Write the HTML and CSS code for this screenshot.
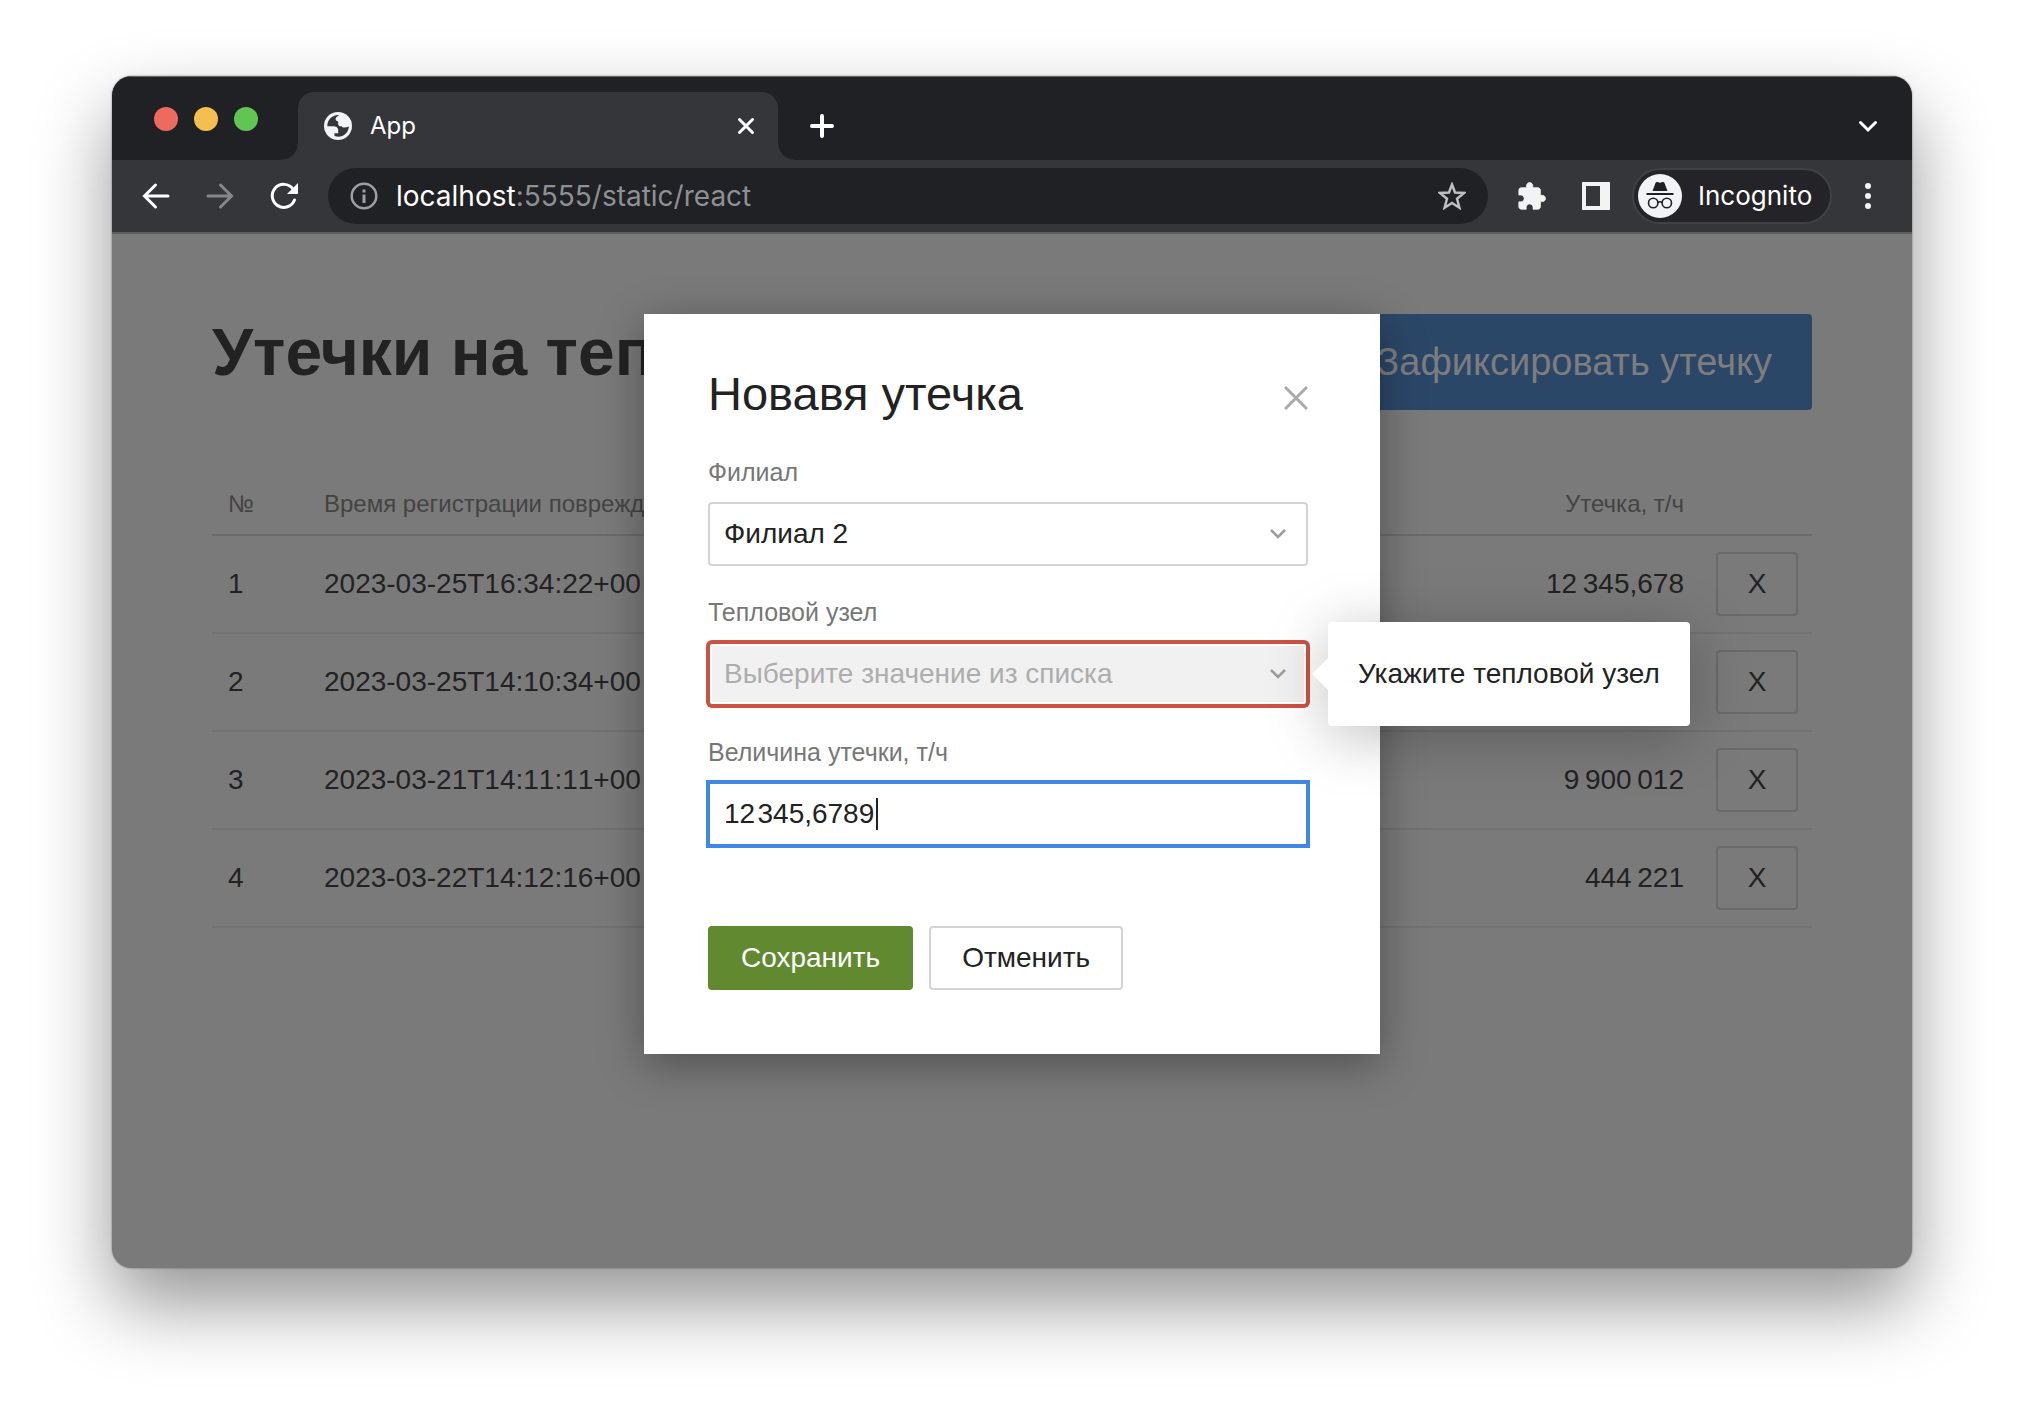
FILE: index.html
```html
<!DOCTYPE html>
<html lang="ru">
<head>
<meta charset="utf-8">
<title>App</title>
<link rel="stylesheet" href="styles.css">
</head>
<body>
<div class="window">
  <header class="tabstrip">
    <div class="lights">
      <span class="light light-close"></span>
      <span class="light light-min"></span>
      <span class="light light-max"></span>
    </div>
    <div class="tab">
      <svg class="icon-28" viewBox="0 0 28 28"><circle cx="14" cy="14" r="14" fill="#f1f3f4"/><path d="M15.500 3.300C13.500 4 11.800 5.200 11.600 6.800c-.2 1.600.8 2.400 2.600 2.600v2.800c.2 1.600 1.800 2.400 3.400 2 .8 1.600 3.600 1.800 7.200.2C24.700 20 20 24.600 14.200 24.800c-2 0-3.600-.6-3.800-1.200v-2.400h3.800v-3.800c-.4-2.400-2.400-3.200-5-3.200H3.300C3.200 8 8 3 14 3z" fill="#35363a"/></svg>
      <span class="tab-title">App</span>
      <button class="bare" aria-label="Close tab"><svg class="icon-28" viewBox="0 0 28 28"><path d="M7.500 7.500l13 13M20.500 7.500l-13 13" stroke="#fff" stroke-width="3" stroke-linecap="round"/></svg></button>
    </div>
    <button class="bare" aria-label="New tab"><svg class="icon-40" viewBox="0 0 40 40"><path d="M20 10v20M10 20h20" stroke="#fff" stroke-width="4" stroke-linecap="round"/></svg></button>
    <button class="bare tab-search" aria-label="Search tabs"><svg class="icon-40" viewBox="0 0 40 40"><path d="M12.500 16.500l7.500 7.500 7.500-7.500" fill="none" stroke="#fff" stroke-width="3" stroke-linecap="round"/></svg></button>
  </header>
  <nav class="toolbar">
    <button class="bare" aria-label="Back"><svg class="icon-40" viewBox="0 0 40 40"><path d="M32 20H9M19.500 9L8.500 20l11 11" fill="none" stroke="#fff" stroke-width="3" stroke-linecap="round"/></svg></button>
    <button class="bare" aria-label="Forward"><svg class="icon-40" viewBox="0 0 40 40"><path d="M8 20h23M20.500 9l11 11-11 11" fill="none" stroke="#86878a" stroke-width="3" stroke-linecap="round"/></svg></button>
    <button class="bare" aria-label="Reload"><svg class="icon-40" viewBox="0 0 40 40"><path d="M30.500 24A11.500 11.500 0 1 1 29 13" fill="none" stroke="#fff" stroke-width="3" stroke-linecap="round"/><path d="M34 7v11H23z" fill="#fff"/></svg></button>
    <div class="omnibox">
      <svg class="icon-28" viewBox="0 0 28 28"><circle cx="14" cy="14" r="12.300" fill="none" stroke="#9aa0a6" stroke-width="2.500"/><path d="M14 7.500v3M14 12.500v8.500" stroke="#9aa0a6" stroke-width="3"/></svg>
      <span class="url">localhost<span class="url-rest">:5555/static/react</span></span>
      <svg class="icon-28" viewBox="0 0 28 28"><path d="M14 2.500l3 8 9 .5-7 5.700 2.400 9L14 21l-7.400 4.700 2.400-9L2 11l9-.5z" fill="none" stroke="#bdbec1" stroke-width="2.500"/></svg>
    </div>
    <div class="extensions">
      <button class="bare" aria-label="Extensions"><svg class="icon-40" viewBox="0 0 40 40"><path transform="translate(4.300 5.300) scale(1.270)" d="M20.500 11H19V7c0-1.100-.9-2-2-2h-4V3.500C13 2.120 11.880 1 10.500 1S8 2.120 8 3.500V5H4c-1.100 0-1.990.9-1.990 2v3.800H3.500c1.490 0 2.700 1.210 2.700 2.700s-1.210 2.700-2.700 2.700H2V20c0 1.100.9 2 2 2h3.800v-1.500c0-1.490 1.210-2.700 2.700-2.700s2.700 1.210 2.700 2.700V22H17c1.100 0 2-.9 2-2v-4h1.500c1.380 0 2.500-1.120 2.500-2.500S21.880 11 20.500 11z" fill="#f1f3f4" stroke="#f1f3f4" stroke-width=".6"/></svg></button>
      <button class="bare" aria-label="Side panel"><svg class="icon-40" viewBox="0 0 40 40"><path d="M6 6h28v28H6zM10 10v20h14V10z" fill="#f1f3f4" fill-rule="evenodd"/></svg></button>
    </div>
    <button class="profile">
      <svg class="avatar" viewBox="0 0 44 44"><circle cx="22" cy="22" r="22" fill="#f1f3f4"/><path d="M14.500 17l3-8q.6-1.500 2-1l2.500.7 2.500-.7q1.400-.5 2 1l3 8z" fill="#202124"/><path d="M8.500 20h27" stroke="#202124" stroke-width="2"/><g fill="none" stroke="#202124" stroke-width="1.600"><circle cx="15.200" cy="29" r="4.700"/><circle cx="28.800" cy="29" r="4.700"/><path d="M19.900 28.500q2.100-1.500 4.200 0"/></g></svg>
      <span>Incognito</span>
    </button>
    <button class="bare" aria-label="Menu"><svg class="icon-40" viewBox="0 0 40 40" fill="#f1f3f4"><circle cx="20" cy="10" r="3"/><circle cx="20" cy="20" r="3"/><circle cx="20" cy="30" r="3"/></svg></button>
  </nav>
  <div class="viewport">
    <main class="app">
      <div class="app-head">
        <h1>Утечки на теп</h1>
        <button class="btn-record">Зафиксировать утечку</button>
      </div>
      <table class="leaks">
        <thead>
          <tr><th class="col-no">№</th><th>Время регистрации поврежд</th><th class="num">Утечка, т/ч</th><th class="col-act"></th></tr>
        </thead>
        <tbody>
          <tr><td>1</td><td>2023-03-25T16:34:22+00</td><td class="num">12&#8201;345,678</td><td class="col-act"><button class="btn-x">X</button></td></tr>
          <tr><td>2</td><td>2023-03-25T14:10:34+00</td><td class="num"></td><td class="col-act"><button class="btn-x">X</button></td></tr>
          <tr><td>3</td><td>2023-03-21T14:11:11+00</td><td class="num">9&#8201;900&#8201;012</td><td class="col-act"><button class="btn-x">X</button></td></tr>
          <tr><td>4</td><td>2023-03-22T14:12:16+00</td><td class="num">444&#8201;221</td><td class="col-act"><button class="btn-x">X</button></td></tr>
        </tbody>
      </table>
    </main>
    <div class="overlay">
      <form class="modal" role="dialog" aria-labelledby="modal-title">
        <div class="modal-head">
          <h2 id="modal-title">Новавя утечка</h2>
          <button type="button" class="bare" aria-label="Закрыть"><svg class="icon-24" viewBox="0 0 24 24"><path d="M1 1l22 22M23 1L1 23" stroke="#aaa" stroke-width="3"/></svg></button>
        </div>
        <div class="field">
          <label for="branch">Филиал</label>
          <div class="control">
            <select id="branch"><option>Филиал 2</option></select>
            <svg class="chevron" viewBox="0 0 16 10"><path d="M1 1l7 7 7-7" fill="none" stroke="#9c9c9c" stroke-width="2.500"/></svg>
          </div>
        </div>
        <div class="field">
          <label for="node">Тепловой узел</label>
          <div class="control">
            <select id="node" class="invalid"><option>Выберите значение из списка</option></select>
            <svg class="chevron" viewBox="0 0 16 10"><path d="M1 1l7 7 7-7" fill="none" stroke="#9c9c9c" stroke-width="2.500"/></svg>
            <div class="tooltip" role="alert">Укажите тепловой узел</div>
          </div>
        </div>
        <div class="field">
          <label for="amount">Величина утечки, т/ч</label>
          <div class="control">
            <input id="amount" class="active" type="text" value="12&#8202;345,6789">
            <span class="caret"></span>
          </div>
        </div>
        <div class="actions">
          <button type="button" class="btn btn-save">Сохранить</button>
          <button type="button" class="btn btn-cancel">Отменить</button>
        </div>
      </form>
    </div>
  </div>
</div>
</body>
</html>
```
FILE: styles.css
```css
* { box-sizing: border-box; }
body {
  margin: 0;
  min-height: 100vh;
  display: flex;
  padding: 76px 112px 148px;
  background: #fff;
  color: #222;
  font: 28px/32px "Liberation Sans", Arial, sans-serif;
}
button, input, select { font: inherit; color: inherit; margin: 0; }
svg { display: block; flex: none; }
.bare { padding: 0; border: 0; background: none; flex: none; }
.icon-24 { width: 24px; height: 24px; }
.icon-28 { width: 28px; height: 28px; }
.icon-40 { width: 40px; height: 40px; }

.window {
  flex: 1;
  min-width: 0;
  display: flex;
  flex-direction: column;
  overflow: hidden;
  border-radius: 20px;
  background: #7a7a7a;
  box-shadow: 0 0 2px rgba(0, 0, 0, .5), 0 36px 76px rgba(0, 0, 0, .42);
}

/* browser chrome */
.tabstrip, .toolbar {
  font-family: Inter, "Liberation Sans", sans-serif;
  color: #fff;
}
.tabstrip {
  display: flex;
  align-items: center;
  height: 84px;
  padding: 15px 24px 0 42px;
  background: #202124;
  border-top: 1px solid #66686a;
}
.lights { display: flex; gap: 16px; width: 144px; padding-bottom: 14px; }
.light { width: 24px; height: 24px; border-radius: 50%; }
.light-close { background: #ed6a5e; }
.light-min { background: #f5bf4f; }
.light-max { background: #61c554; }
.tab {
  position: relative;
  display: flex;
  align-items: center;
  gap: 18px;
  width: 480px;
  height: 100%;
  padding: 0 18px 0 26px;
  border-radius: 16px 16px 0 0;
  background: #35363a;
  font-size: 24px;
  margin-right: 24px;
}
.tab::before, .tab::after {
  content: "";
  position: absolute;
  bottom: 0;
  width: 16px;
  height: 16px;
}
.tab::before { right: 100%; background: radial-gradient(circle at 0 0, #202124 15px, #35363a 16px); }
.tab::after { left: 100%; background: radial-gradient(circle at 100% 0, #202124 15px, #35363a 16px); }
.tab-title { flex: 1; }
.tab-search { margin-left: auto; }
.toolbar {
  display: flex;
  align-items: center;
  gap: 24px;
  height: 74px;
  padding: 0 24px;
  background: #35363a;
  border-bottom: 2px solid #5d5e60;
}
.omnibox {
  flex: 1;
  display: flex;
  align-items: center;
  height: 56px;
  padding: 0 22px;
  border-radius: 28px;
  background: #202124;
  font-size: 28px;
}
.url { flex: 1; margin-left: 18px; }
.url-rest { color: #8f9093; }
.extensions { display: flex; gap: 24px; }
.profile {
  display: flex;
  align-items: center;
  gap: 16px;
  width: 200px;
  height: 56px;
  margin: 0 -8px;
  padding: 0 4px;
  border: 2px solid #404045;
  border-radius: 28px;
  background: #242328;
  font-size: 26px;
}
.avatar { width: 44px; height: 44px; }

/* page and dialog share one grid cell */
.viewport { flex: 1; display: grid; grid-template-columns: 100%; }
.app, .overlay { grid-area: 1 / 1; }
.app { padding: 80px 100px 0; }
.app-head {
  display: flex;
  justify-content: space-between;
  align-items: flex-start;
  margin-bottom: 78px;
}
h1 { margin: 0; font-size: 66px; line-height: 76px; white-space: nowrap; }
.btn-record {
  height: 96px;
  padding: 0 40px;
  border: 0;
  border-radius: 4px;
  background: #2b4768;
  color: #7d7d7d;
  font-size: 38px;
  white-space: nowrap;
}
.leaks { width: 100%; border-collapse: separate; border-spacing: 0; }
.leaks th {
  padding: 0 16px 14px;
  border-bottom: 2px solid #6b6b6b;
  color: #444;
  font-size: 24px;
  font-weight: 400;
  text-align: left;
}
.leaks td { padding: 16px; border-bottom: 2px solid #727272; font-kerning: none; }
.leaks td.col-act, .leaks th.col-act { width: 112px; padding-right: 14px; }
.leaks .num { text-align: right; }
.leaks .col-no { width: 96px; }
.btn-x {
  display: block;
  width: 82px;
  height: 64px;
  padding: 0;
  border: 2px solid #6a6a6a;
  border-radius: 4px;
  background: none;
}

.overlay { display: flex; justify-content: center; align-items: flex-start; z-index: 1; }
.modal {
  width: 736px;
  margin: 80px 0;
  padding: 48px 72px 64px 64px;
  background: #fff;
  box-shadow: 0 10px 40px rgba(0, 0, 0, .35);
}
.modal-head {
  display: flex;
  justify-content: space-between;
  align-items: center;
  height: 72px;
  margin-bottom: 22px;
}
h2 { margin: 0; padding-bottom: 8px; font-size: 47px; line-height: 56px; font-weight: 400; }
.field { margin-bottom: 30px; }
.field label {
  display: block;
  margin-bottom: 14px;
  color: #777;
  font-size: 25px;
}
.control { position: relative; }
.control select, .control input {
  display: block;
  width: 100%;
  height: 64px;
  padding: 0 14px;
  border: 2px solid #d4d4d4;
  border-radius: 4px;
  background: #fff;
  appearance: none;
  outline: none;
}
.control .invalid {
  border-color: #cc5244;
  background: #f1f1f1;
  color: #adadad;
  box-shadow: 0 0 0 2px #cc5244, inset 0 0 0 2px #fff;
}
.control .active {
  border-color: #4088e8;
  border-radius: 0;
  outline: 2px solid #4088e8;
}
.chevron { position: absolute; right: 22px; top: 27px; width: 16px; height: 10px; }
.caret { position: absolute; left: 168px; top: 16px; width: 2px; height: 32px; background: #222; }
.tooltip {
  position: absolute;
  top: -20px;
  left: calc(100% + 20px);
  padding: 36px 30px;
  border-radius: 4px;
  background: #fff;
  box-shadow: 0 10px 60px rgba(0, 0, 0, .25);
  white-space: nowrap;
}
.tooltip::before {
  content: "";
  position: absolute;
  right: 100%;
  top: 36px;
  border: 16px solid transparent;
  border-left-width: 0;
  border-right-color: #fff;
}
.actions { display: flex; gap: 16px; margin-top: 80px; }
.btn { height: 64px; padding: 0 31px; border: 2px solid #d4d4d4; border-radius: 4px; background: #fff; }
.btn-save { border-color: #618930; background: #618930; color: #fff; }
```
